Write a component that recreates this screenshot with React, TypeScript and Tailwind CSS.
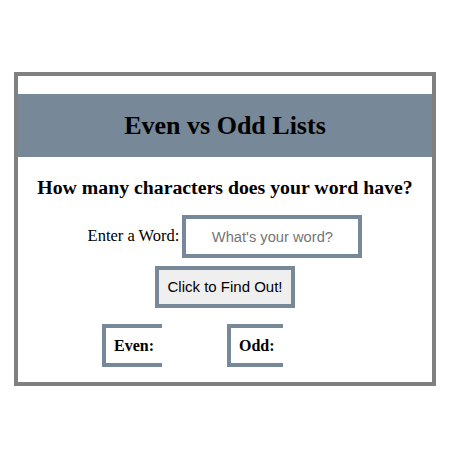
export default function App() {
  const serif = { fontFamily: '"Liberation Serif", "Times New Roman", serif' };
  const sans = '[font-family:"Liberation_Sans",Arial,sans-serif]';

  return (
    <div className="min-h-[451px] bg-white pt-[72px]" style={serif}>
      <div className="mx-auto w-[422px] border-4 border-[#808080] pt-[18px] pb-[15px]">
        {/* Title bar */}
        <div className="flex h-[63px] items-center justify-center bg-[#778899]">
          <h1 className="text-[26px] font-bold leading-none text-black">Even vs Odd Lists</h1>
        </div>

        <h2 className="mt-[17px] text-center text-[19.8px] font-bold leading-[26px] text-black">
          How many characters does your word have?
        </h2>

        {/* Input row */}
        <div className="mt-[15px] flex items-center justify-center gap-[3px]">
          <label className="text-[16.5px] text-black">Enter a Word:</label>
          <input
            type="text"
            placeholder="What's your word?"
            className={`h-[43px] w-[180px] border-4 border-[#778899] bg-white text-center text-[14.7px] text-black outline-none placeholder:text-[#757575] ${sans}`}
          />
        </div>

        <div className="mt-[8px] flex justify-center">
          <button
            className={`h-[42px] w-[140px] border-4 border-[#778899] bg-[#efefef] text-[15px] text-black ${sans}`}
          >
            Click to Find Out!
          </button>
        </div>

        {/* Lists */}
        <div className="mt-[16px] flex pl-[84px]">
          <div className="flex h-[43px] w-[60px] items-center border-y-4 border-l-4 border-[#778899] pl-[8px]">
            <span className="text-[16px] font-bold">Even:</span>
          </div>
          <div className="ml-[65px] flex h-[43px] w-[56px] items-center border-y-4 border-l-4 border-[#778899] pl-[8px]">
            <span className="text-[16px] font-bold">Odd:</span>
          </div>
        </div>
      </div>
    </div>
  );
}
